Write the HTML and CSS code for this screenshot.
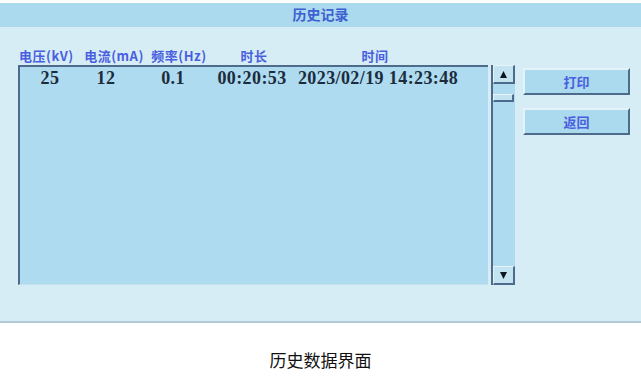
FILE: index.html
```html
<!DOCTYPE html>
<html lang="zh-CN">
<head>
	<meta charset="UTF-8">
	<title>历史数据界面</title>
	<meta name="viewport" content="width=device-width, initial-scale=1.0">
	<link rel="stylesheet" href="styles.css">
</head>
<body>
	<div class="panel">
		<div class="title-bar">历史记录</div>

		<div class="content">
			<div class="table-area">
				<div class="header-row">
					<span>电压(kV)</span>
					<span>电流(mA)</span>
					<span>频率(Hz)</span>
					<span>时长</span>
					<span>时间</span>
				</div>

				<div class="list-wrap">
					<div class="list-box">
						<div class="data-row">
							<span>25</span>
							<span>12</span>
							<span>0.1</span>
							<span>00:20:53</span>
							<span>2023/02/19 14:23:48</span>
						</div>
					</div>

					<div class="scrollbar">
						<div class="arrow-btn">
							<svg width="9" height="9" viewBox="0 0 9 9"><polygon points="4.5,1 8,8 1,8" fill="#0d1620"/></svg>
						</div>
						<div class="thumb"></div>
						<div class="track"></div>
						<div class="arrow-btn">
							<svg width="9" height="9" viewBox="0 0 9 9"><polygon points="1,1 8,1 4.5,8" fill="#0d1620"/></svg>
						</div>
					</div>
				</div>
			</div>

			<div class="buttons">
				<button class="btn">打印</button>
				<button class="btn">返回</button>
			</div>
		</div>
	</div>

	<p class="caption">历史数据界面</p>
</body>
</html>
```

FILE: styles.css
```css
body {
	margin: 0;
	padding-top: 3px;
	background-color: #fff;
	font-family: "Noto Sans CJK SC", "Noto Sans", sans-serif;
}

.panel {
	background-color: #d6edf5;
	height: 318px;
	border-bottom: 2px solid #b3cbd6;
}

.title-bar {
	height: 24px;
	line-height: 22px;
	background-color: #abd9ed;
	text-align: center;
	color: #3c5fd2;
	font-size: 14px;
	font-weight: bold;
}

.content {
	display: flex;
	padding: 21px 11px 0 18px;
}

.table-area {
	width: 497px;
}

.header-row {
	display: grid;
	grid-template-columns: 62px 68px 62px 88px 154px;
	text-align: center;
	height: 17px;
	line-height: 15px;
	color: #4a5fe0;
	font-size: 13px;
	font-weight: bold;
	letter-spacing: 0.5px;
}

.header-row span {
	white-space: nowrap;
}

.header-row span:first-child {
	text-align: left;
	padding-left: 1px;
}

.list-wrap {
	display: flex;
	gap: 3px;
}

.list-box {
	width: 468px;
	height: 217px;
	background-color: #aedbef;
	border-top: 2px solid #4d6c8c;
	border-left: 2px solid #4d6c8c;
	border-bottom: 1px solid #c5e3ef;
}

.data-row {
	display: grid;
	grid-template-columns: 60px 52px 82px 76px 176px;
	text-align: center;
	padding-top: 3px;
	line-height: 17px;
	color: #1c2c3c;
	font-family: "Liberation Serif", "DejaVu Serif", serif;
	font-size: 18px;
	font-weight: bold;
	letter-spacing: 0.4px;
	white-space: nowrap;
}

.scrollbar {
	display: flex;
	flex-direction: column;
	width: 22px;
	height: 220px;
	background-color: #aedbef;
	border-left: 2px solid #4d6c8c;
}

.arrow-btn {
	display: flex;
	justify-content: center;
	align-items: center;
	height: 16px;
	background-color: #c3e3f1;
	border-top: 1px solid #e4f3f9;
	border-left: 1px solid #e4f3f9;
	border-right: 2px solid #4d6c8c;
	border-bottom: 2px solid #4d6c8c;
}

.thumb {
	height: 5px;
	margin: 10px 1px 0 0;
	background-color: #c3e3f1;
	border: 1px solid #e4f3f9;
	border-right: 2px solid #4d6c8c;
	border-bottom: 2px solid #4d6c8c;
}

.track {
	flex: 1;
}

.buttons {
	display: flex;
	flex-direction: column;
	gap: 13px;
	margin-left: 8px;
	padding-top: 20px;
}

.btn {
	width: 107px;
	height: 27px;
	background-color: #abd9ed;
	border: 2px solid #4d6c8c;
	border-top-color: #e4f3f9;
	border-left-color: #e4f3f9;
	color: #4a5fe0;
	font-family: "Noto Sans CJK SC", sans-serif;
	font-size: 13px;
	font-weight: bold;
	padding: 0;
}

.caption {
	margin: 24px 0 0;
	text-align: center;
	font-size: 17px;
	color: #111;
}
```
